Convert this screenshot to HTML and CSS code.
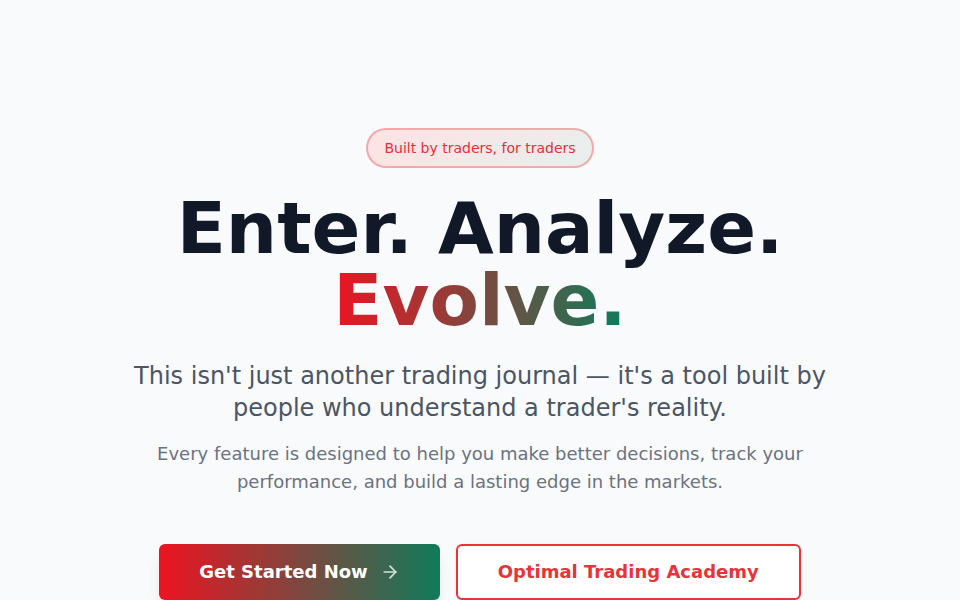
FILE: index.html
```html
<!DOCTYPE html>
<html lang="en">
<head>
<meta charset="utf-8">
<title>Enter. Analyze. Evolve.</title>
<link rel="stylesheet" href="styles.css">
</head>
<body>
<main class="hero">
  <div class="hero-inner">
    <span class="badge">Built by traders, for traders</span>
    <h1 class="title">Enter. Analyze.<br><span class="title-accent">Evolve.</span></h1>
    <p class="lead">This isn't just another trading journal — it's a tool built by people who understand a trader's reality.</p>
    <p class="sub">Every feature is designed to help you make better decisions, track your performance, and build a lasting edge in the markets.</p>
    <div class="actions">
      <a class="btn btn-primary" href="#">Get Started Now
        <svg class="btn-icon" width="20" height="20" viewBox="0 0 24 24" fill="none" stroke="currentColor" stroke-width="2" stroke-linecap="round" stroke-linejoin="round"><path d="M5 12h14"/><path d="m12 5 7 7-7 7"/></svg>
      </a>
      <a class="btn btn-outline" href="#">Optimal Trading Academy</a>
    </div>
  </div>
</main>
</body>
</html>
```

FILE: styles.css
```css
* { box-sizing: border-box; }
html, body { margin: 0; padding: 0; }
body {
  background: #f9fafc;
  font-family: "DejaVu Sans", "Noto Sans", sans-serif;
  color: #111827;
  height: 600px;
  overflow: hidden;
}
.hero {
  padding-top: 128px;
}
.hero-inner {
  display: flex;
  flex-direction: column;
  align-items: center;
  text-align: center;
}
.badge {
  display: inline-block;
  font-size: 14px;
  line-height: 20px;
  padding: 8px 16px;
  border: 2px solid rgba(239, 68, 68, 0.38);
  border-radius: 999px;
  color: #e5303a;
  background: linear-gradient(to right, #fde3e4, #e9eeec);
  margin-bottom: 24px;
}
.title {
  margin: 0 0 24px;
  font-size: 72px;
  line-height: 72px;
  font-weight: 700;
  color: #111827;
}
.title-accent {
  background: linear-gradient(to right, #ec1422, #0d7c5a);
  -webkit-background-clip: text;
  background-clip: text;
  color: transparent;
}
.lead {
  margin: 0 0 16px;
  max-width: 768px;
  font-size: 24px;
  line-height: 32px;
  color: #4b5563;
}
.sub {
  margin: 0 0 48px;
  max-width: 672px;
  font-size: 18px;
  line-height: 28px;
  color: #6b7280;
}
.actions {
  display: flex;
  gap: 16px;
  justify-content: center;
}
.btn {
  display: inline-flex;
  align-items: center;
  justify-content: center;
  height: 56px;
  padding: 0 40px;
  border-radius: 6px;
  font-size: 18px;
  line-height: 28px;
  font-weight: 700;
  text-decoration: none;
}
.btn-primary {
  color: #ffffff;
  background: linear-gradient(to right, #ec1422, #0f7b5a);
  box-shadow: 0 10px 15px -3px rgba(0, 0, 0, 0.1), 0 4px 6px -4px rgba(0, 0, 0, 0.1);
  gap: 12px;
}
.btn-icon {
  opacity: 0.8;
}
.btn-outline {
  color: #e8333a;
  background: #ffffff;
  border: 2px solid #e8333a;
  box-shadow: 0 1px 3px rgba(0, 0, 0, 0.06);
}
```
